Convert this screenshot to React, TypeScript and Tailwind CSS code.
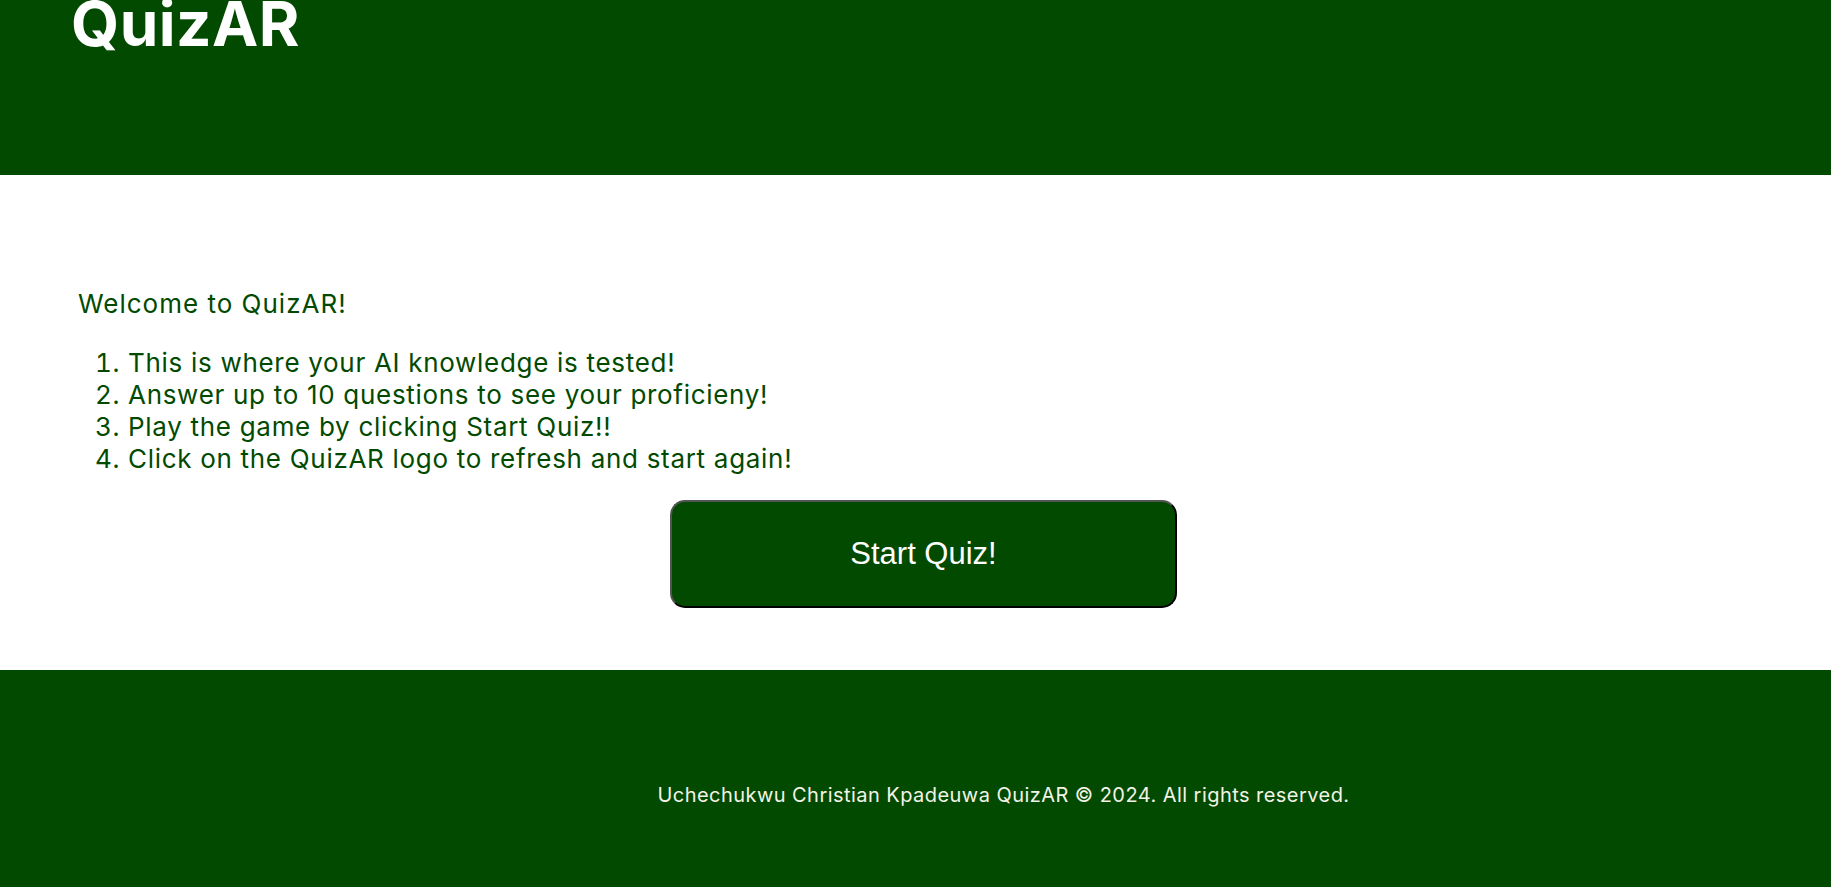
import React from "react";

export default function App() {
  return (
    <div className="w-full min-h-[887px] flex flex-col font-['Inter',sans-serif]">
      <header className="h-[175px] bg-[#024a00] overflow-hidden pl-[71px]">
        <h1 className="mt-[-13px] text-[62px] font-bold leading-[1.2] text-white tracking-[0.5px]">
          QuizAR
        </h1>
      </header>
      <main className="h-[495px] bg-white pt-[114px]">
        <div className="pl-[78px]">
          <p className="text-[26px] leading-[30px] tracking-[1px] text-[#024a00]">Welcome to QuizAR!</p>
          <ol className="mt-[28px] pl-[50px] list-decimal text-[26px] leading-[32px] tracking-[0.7px] text-[#024a00]">
            <li>This is where your AI knowledge is tested!</li>
            <li>Answer up to 10 questions to see your proficieny!</li>
            <li>Play the game by clicking Start Quiz!!</li>
            <li>Click on the QuizAR logo to refresh and start again!</li>
          </ol>
        </div>
        <div className="mt-[25px] flex justify-center pl-[16px]">
          <button className="w-[507px] h-[108px] rounded-[15px] border-2 border-black [border-style:outset] bg-[#024a00] text-white text-[31px] font-['Liberation_Sans',sans-serif]">
            Start Quiz!
          </button>
        </div>
      </main>
      <footer className="h-[217px] bg-[#024a00] flex items-center justify-center pt-[32px] pl-[176px]">
        <p className="text-[20px] tracking-[0.45px] text-[#f3f3e6]">
          Uchechukwu Christian Kpadeuwa QuizAR © 2024. All rights reserved.
        </p>
      </footer>
    </div>
  );
}
